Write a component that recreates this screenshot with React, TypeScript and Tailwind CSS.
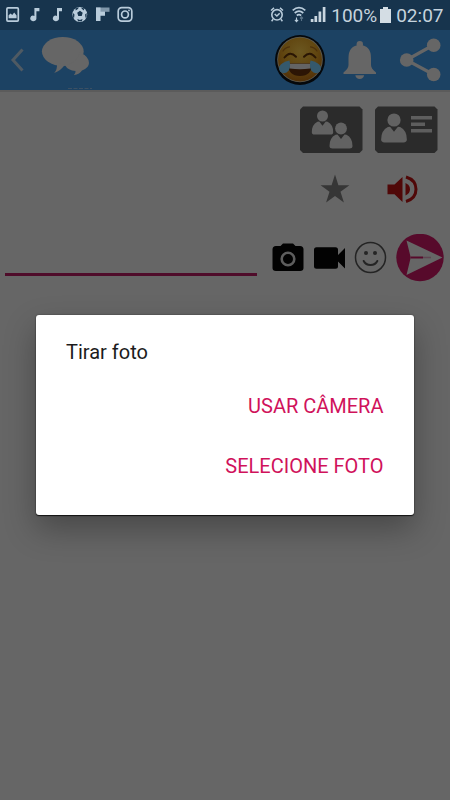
const ROBOTO = "font-['Roboto','Liberation_Sans',sans-serif]";

function StatusIcons() {
  return (
    <svg width="140" height="30" viewBox="0 0 140 30" fill="#b9ccdb" aria-hidden="true">
      <rect x="6.9" y="7.9" width="11.4" height="13.2" rx="1" fill="none" stroke="#b9ccdb" strokeWidth="1.7" />
      <path d="M8.6 18.2v-3l2-1.8 1.6 1.5 2-2.5 2.4 3v2.8z" />
      <path d="M34.4 8h5v3.3h-3v7.2a3.1 2.8 0 1 1-2-2.6z" />
      <path d="M57 8h5v3.3h-3v7.2a3.1 2.8 0 1 1-2-2.6z" />
      <circle cx="79.8" cy="14.5" r="7.4" />
      <path
        d="M77.2 12.8l2.8-2 2.7 2-1 3.2h-3.4zM75.5 8.5l3-1.2-.3 1.5-2.5 1.6zM84 8.6l-2.6-1.2.3 1.4 2.3 1.7zM73 13l1.5 1.5-.4 3.2-1-.3zM86.6 13l-1.5 1.5.4 3.2 1.1-.5zM77.3 19l2.6.9 2.7-.9-.8 2.2h-3.7z"
        fill="#17344d"
      />
      <path d="M96 7.5h13.5v4.3H96z" opacity=".65" />
      <path d="M96 7.5h4.5V21H96zM100 11.5h5v4.2h-5z" />
      <rect x="118.2" y="7.6" width="13.6" height="13.6" rx="3.6" fill="none" stroke="#b9ccdb" strokeWidth="1.7" />
      <circle cx="125" cy="14.4" r="3.4" fill="none" stroke="#b9ccdb" strokeWidth="1.7" />
      <circle cx="129" cy="10.4" r=".9" />
    </svg>
  );
}

function SignalIcons() {
  return (
    <svg width="60" height="30" viewBox="267.5 0 60 30" fill="none" stroke="#b9ccdb" aria-hidden="true">
      <circle cx="276.5" cy="14.8" r="5.2" strokeWidth="1.6" />
      <path d="M270.5 10.5l3-2.6M282.5 10.5l-3-2.6M272.6 19.3l-1.5 1.9M280.4 19.3l1.5 1.9M274.2 14l2.2 2 2.8-2.8" strokeWidth="1.5" />
      <path d="M292.2 10.3q6.3-5.4 12.6 0M294.2 13q4.3-3.6 8.6 0M296.3 15.5q2.2-1.7 4.4 0" strokeWidth="1.7" />
      <path d="M296 17.5v4m-1.6-1.6 1.6 1.8 1.6-1.8" strokeWidth="1.1" />
      <path d="M301 21v-4m-1.5 1.5 1.5-1.6 1.5 1.6" strokeWidth="1.1" opacity=".4" />
      <path d="M311.6 22v-3M315.3 22v-6M319.4 22V11.5M323.6 22V7" stroke="#c9d6e0" strokeWidth="2.7" />
    </svg>
  );
}

function StatusBar() {
  return (
    <div className="flex h-[30px] shrink-0 items-center bg-[#17344d] text-[19px] leading-none text-[#c6d3dd]">
      <StatusIcons />
      <div className="ml-auto flex items-center pr-[6.5px]">
        <SignalIcons />
        <span className="ml-[3px]">100%</span>
        <svg width="11" height="16" viewBox="0 0 11 16" className="ml-[3px]" fill="#d4dde4" aria-hidden="true">
          <path d="M3 0h5v2h3v14H0V2h3z" />
        </svg>
        <span className="ml-[5px]">02:07</span>
      </div>
    </div>
  );
}

function LaughEmoji() {
  return (
    <svg width="52" height="52" viewBox="0 0 52 52" aria-hidden="true">
      <defs>
        <radialGradient id="face" cx=".5" cy=".32" r=".68">
          <stop offset="0" stopColor="#6b5720" />
          <stop offset=".55" stopColor="#614610" />
          <stop offset="1" stopColor="#523008" />
        </radialGradient>
      </defs>
      <circle cx="26" cy="26" r="25" fill="#05080b" />
      <circle cx="26" cy="25.5" r="22.8" fill="#5c5a50" />
      <circle cx="26" cy="25.5" r="21.9" fill="url(#face)" />
      <path d="M9 17q2-3.500 6.500-4.200M36.500 12.800q4.500.7 6.500 4.200" fill="none" stroke="#4d300c" strokeWidth="1.2" strokeLinecap="round" />
      <path d="M10.500 23.500q5.500-7 11.500-.8M30 22.700q6-6.200 11.500.8" fill="none" stroke="#2a1604" strokeWidth="2" strokeLinecap="round" />
      <path d="M13.500 29.500h25q-1 12.500-12.500 12.500t-12.500-12.500z" fill="#2c1505" />
      <path d="M14.500 29.800h23l-1.200 4.700q-10.300 1.500-20.600 0z" fill="#646464" />
      <path d="M15.500 26.500q1.500 6-.8 10-3 4-7.200 2-3.700-2.200-2-6.200 1.800-3.800 10-5.800z" fill="#35596d" />
      <path d="M36.500 26.500q-1.500 6 .8 10 3 4 7.200 2 3.700-2.200 2-6.200-1.800-3.800-10-5.800z" fill="#35596d" />
    </svg>
  );
}

function AppBar() {
  return (
    <header className="flex h-[60px] shrink-0 items-start bg-[#1c4263]">
      <svg width="100" height="60" viewBox="0 30 100 60" aria-hidden="true">
        <path d="M22.500 49.500 13 60l9.500 10.500" fill="none" stroke="#4f5a63" strokeWidth="3" />
        <g fill="#666">
          <ellipse cx="62.8" cy="51.5" rx="20.9" ry="14.5" />
          <path d="M57 63.500q.5 6-2.800 9.500 7-2.500 10.800-8.500z" />
          <path d="M80 52.500q9 4 9 10.500 0 5-7 7.500-2 3.500-8.200 4.800 2-1.500 1.700-4.300-7.500-.5-10.500-5.800 12-2 15-12.700z" />
        </g>
        <path d="M68 88.500h24" stroke="#3b5064" strokeWidth="1" strokeDasharray="4 1.5" />
      </svg>
      <div className="ml-auto flex">
        <div className="pt-1">
          <LaughEmoji />
        </div>
        <svg width="124" height="60" viewBox="326 30 124 60" fill="#666" aria-hidden="true">
          <circle cx="359.8" cy="44.3" r="3.2" />
          <path d="M348.500 58q0-12.500 11.300-13Q371 45.500 371 58v7q0 3.500 5 7.500v1.500h-32.500v-1.500q5-4 5-7.500z" />
          <path d="M355.300 75.200h8.800q-.8 3.800-4.400 3.800t-4.400-3.800z" />
          <path d="M433.500 45 406.500 60l27 14.500" fill="none" stroke="#666" strokeWidth="3.2" />
          <circle cx="433.7" cy="45.2" r="6.8" />
          <circle cx="406.7" cy="60" r="6.8" />
          <circle cx="433.7" cy="74.5" r="6.8" />
        </svg>
      </div>
    </header>
  );
}

function Person({ x, y, scale = 1 }: { x: number; y: number; scale?: number }) {
  return (
    <g transform={`translate(${x} ${y}) scale(${scale})`} fill="#626262">
      <circle cx="0" cy="0" r="5.9" />
      <path d="M-5.500 6.300-3.500 6 0 10.500 3.500 6l2 .3q6 3 6 11.200 0 2.500-3 2.500h-17q-3 0-3-2.500 0-8.200 6-11.200z" />
    </g>
  );
}

function ProfileTools() {
  return (
    <div className="flex flex-col items-end pr-[12px] pt-[14px]">
      <div className="flex gap-3">
        <button aria-label="Amigos">
          <svg width="63" height="47" viewBox="0 0 63 47">
            <path d="M3 .5h56.500l3 3V44l-3 3H3l-3-3V3.500z" fill="#2b2b2b" />
            <Person x={22.5} y={10} scale={0.93} />
            <Person x={41} y={22.5} scale={1} />
          </svg>
        </button>
        <button aria-label="Perfil">
          <svg width="63" height="47" viewBox="0 0 63 47">
            <path d="M3 .5h56.500l3 3V44l-3 3H3l-3-3V3.500z" fill="#2b2b2b" />
            <Person x={19} y={14} scale={1.12} />
            <path d="M36 11.800h21M36 18.300h14M36 24.800h21" stroke="#5e5e5e" strokeWidth="3.6" />
          </svg>
        </button>
      </div>
      <div className="mt-[21px] flex items-center gap-[37px] pr-[19px]">
        <svg width="30" height="30" viewBox="0 0 30 30" fill="#363636" aria-hidden="true">
          <path d="M15 .5l3.400 10.700h11l-8.900 6.600 3.400 10.700L15 22l-8.900 6.500 3.400-10.700L.6 11.200h11z" />
        </svg>
        <svg width="32" height="30" viewBox="0 0 32 30" aria-hidden="true">
          <path d="M.5 10.500h7L15.500 3v25l-8-7.800h-7z" fill="#500808" />
          <path d="M18.500 9q4.500 2 4.500 6.300t-4.500 6.200z" fill="#500808" />
          <path d="M19 3q10 3 10 12.300T19 27.500" fill="none" stroke="#500808" strokeWidth="3" />
        </svg>
      </div>
    </div>
  );
}

function MessageRow() {
  return (
    <div className="mt-[30px] flex h-[48px] items-start pl-[5px] pr-[6px]">
      <div className="h-[42px] w-[252px] border-b-[3px] border-[#4f0c2a]" />
      <svg width="187" height="48" viewBox="257 234 187 48" className="shrink-0" aria-hidden="true">
        <path
          d="M276 246h4.500l2.500-2.500h10l2.500 2.500h4.500q3.500 0 3.500 3.500V268q0 3-3.500 3h-24q-3.500 0-3.500-3v-18.500q0-3.500 3.500-3.500z"
          fill="#020202"
        />
        <circle cx="288" cy="259" r="6.3" fill="none" stroke="#5d5d5d" strokeWidth="2.6" />
        <path d="M316.500 247.300h19q2.500 0 2.500 2.500v5.200l7-7v20.500l-7-7v4.800q0 2.500-2.500 2.500h-19q-2.500 0-2.500-2.500v-16.500q0-2.500 2.500-2.500z" fill="#020202" />
        <g fill="none" stroke="#242424" strokeWidth="1.5">
          <circle cx="370.5" cy="257.5" r="15" />
          <path d="M363.700 261q2 4 6.800 4t6.800-4" strokeWidth="2" strokeLinecap="round" />
        </g>
        <circle cx="366" cy="253" r="2" fill="#252525" />
        <circle cx="375" cy="253" r="2" fill="#252525" />
        <circle cx="420" cy="257.5" r="23.7" fill="#570a2b" />
        <path d="M406.500 240.500 442.500 257.500 406.500 275l4.200-17.500z" fill="#666" />
        <path d="M410.700 257.500H423" stroke="#570a2b" strokeWidth="2" />
        <path d="M423 257.500h8" stroke="#5f4652" strokeWidth="1.5" />
      </svg>
    </div>
  );
}

function PhotoDialog() {
  return (
    <div
      role="dialog"
      aria-labelledby="photo-title"
      className="absolute left-[36px] top-[315px] flex h-[200px] w-[378px] flex-col rounded-[3px] bg-white px-[30px] shadow-[0_1px_1px_rgba(0,0,0,0.75),0_0_2px_rgba(0,0,0,0.4),0_14px_32px_rgba(0,0,0,0.3)]"
    >
      <h2 id="photo-title" className="pt-[25px] text-[20px] leading-6 text-[#1c1c1c]">
        Tirar foto
      </h2>
      <div className="mt-[30px] flex flex-col items-end gap-9 pr-[0.5px] text-[20px] leading-6 text-[#d0125b]">
        <button>USAR CÂMERA</button>
        <button>SELECIONE FOTO</button>
      </div>
    </div>
  );
}

export default function App() {
  return (
    <div className={`relative flex h-[800px] w-[450px] flex-col overflow-hidden bg-[#666] ${ROBOTO}`}>
      <StatusBar />
      <AppBar />
      <main className="flex-1 border-t-2 border-[#5b5b5b]">
        <ProfileTools />
        <MessageRow />
      </main>
      <PhotoDialog />
    </div>
  );
}
